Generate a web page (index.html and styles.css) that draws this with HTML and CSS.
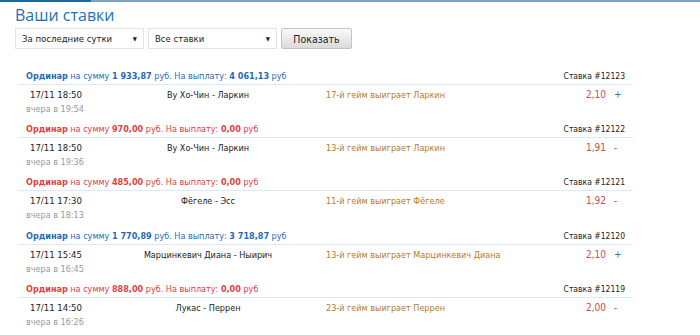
FILE: index.html
```html
<!DOCTYPE html>
<html lang="ru">
<head>
    <meta charset="UTF-8">
    <title>Ваши ставки</title>
    <link rel="stylesheet" href="styles.css">
</head>
<body>
    <div class="topline"><span></span></div>
    <div class="page">
        <h1 class="title">Ваши ставки</h1>
        <div class="filters">
            <div class="select first">За последние сутки<span class="arrow">▼</span></div>
            <div class="select">Все ставки<span class="arrow">▼</span></div>
            <button class="btn">Показать</button>
        </div>

        <div class="bets">
            <div class="bet win">
                <div class="bet-head">
                    <div><b>Ординар</b> на сумму <b>1 933,87</b> руб. На выплату: <b>4 061,13</b> руб</div>
                    <div class="num">Ставка #12123</div>
                </div>
                <div class="bet-row">
                    <span class="date">17/11 18:50</span>
                    <span class="match">Ву Хо-Чин - Ларкин</span>
                    <span class="pick">17-й гейм выиграет Ларкин</span>
                    <span class="odds">2,10</span>
                    <span class="sign">+</span>
                </div>
                <div class="when">вчера в 19:54</div>
            </div>

            <div class="bet lose">
                <div class="bet-head">
                    <div><b>Ординар</b> на сумму <b>970,00</b> руб. На выплату: <b>0,00</b> руб</div>
                    <div class="num">Ставка #12122</div>
                </div>
                <div class="bet-row">
                    <span class="date">17/11 18:50</span>
                    <span class="match">Ву Хо-Чин - Ларкин</span>
                    <span class="pick">13-й гейм выиграет Ларкин</span>
                    <span class="odds">1,91</span>
                    <span class="sign">-</span>
                </div>
                <div class="when">вчера в 19:36</div>
            </div>

            <div class="bet lose">
                <div class="bet-head">
                    <div><b>Ординар</b> на сумму <b>485,00</b> руб. На выплату: <b>0,00</b> руб</div>
                    <div class="num">Ставка #12121</div>
                </div>
                <div class="bet-row">
                    <span class="date">17/11 17:30</span>
                    <span class="match">Фёгеле - Эсс</span>
                    <span class="pick">11-й гейм выиграет Фёгеле</span>
                    <span class="odds">1,92</span>
                    <span class="sign">-</span>
                </div>
                <div class="when">вчера в 18:13</div>
            </div>

            <div class="bet win">
                <div class="bet-head">
                    <div><b>Ординар</b> на сумму <b>1 770,89</b> руб. На выплату: <b>3 718,87</b> руб</div>
                    <div class="num">Ставка #12120</div>
                </div>
                <div class="bet-row">
                    <span class="date">17/11 15:45</span>
                    <span class="match">Марцинкевич Диана - Ныирич</span>
                    <span class="pick">13-й гейм выиграет Марцинкевич Диана</span>
                    <span class="odds">2,10</span>
                    <span class="sign">+</span>
                </div>
                <div class="when">вчера в 16:45</div>
            </div>

            <div class="bet lose">
                <div class="bet-head">
                    <div><b>Ординар</b> на сумму <b>888,00</b> руб. На выплату: <b>0,00</b> руб</div>
                    <div class="num">Ставка #12119</div>
                </div>
                <div class="bet-row">
                    <span class="date">17/11 14:50</span>
                    <span class="match">Лукас - Перрен</span>
                    <span class="pick">23-й гейм выиграет Перрен</span>
                    <span class="odds">2,00</span>
                    <span class="sign">-</span>
                </div>
                <div class="when">вчера в 16:26</div>
            </div>
        </div>
    </div>
</body>
</html>
```

FILE: styles.css
```css
* {
    margin: 0;
    padding: 0;
    box-sizing: border-box;
}
body {
    font-family: "DejaVu Sans Condensed", "DejaVu Sans", sans-serif;
    font-size: 9px;
    color: #222;
    background-color: #fff;
}
/* полоска сверху */
.topline {
    height: 2px;
    background-color: #7ea3bf;
}
.topline span {
    display: block;
    width: 91px;
    height: 2px;
    background-color: #1b6a97;
}
.page {
    padding: 0 15px;
}
.title {
    font-family: "Open Sans", sans-serif;
    font-weight: normal;
    font-size: 16px;
    line-height: 20px;
    color: #1e6fc0;
    padding-top: 3px;
}
/* фильтры */
.filters {
    display: flex;
    gap: 4px;
    margin-top: 3px;
    height: 21px;
}
.select {
    position: relative;
    width: 129px;
    height: 21px;
    line-height: 19px;
    border: 1px solid #e4e4e4;
    padding-left: 6px;
    font-size: 9.5px;
    background-color: #fff;
}
.select .arrow {
    position: absolute;
    right: 6px;
    top: 0;
    font-size: 6px;
    color: #222;
}
.btn {
    width: 71px;
    height: 21px;
    font-family: "DejaVu Sans Condensed", "DejaVu Sans", sans-serif;
    font-size: 10.5px;
    color: #222;
    border: 1px solid #c3c3c3;
    border-radius: 2px;
    background: linear-gradient(#fafafa, #dadada);
}
/* ставки */
.bets {
    margin: 19px 52px 0 3px;
}
.bet {
    padding-bottom: 5.2px;
}
.bet-head {
    display: flex;
    justify-content: space-between;
    height: 17px;
    line-height: 16px;
    padding: 0 8px;
    border-bottom: 1px solid #dbeaf7;
}
.bet-head .num {
    font-size: 8.5px;
    color: #222;
}
.win .bet-head {
    color: #1d6ac0;
}
.lose .bet-head {
    color: #e2403f;
}
.bet-row {
    display: grid;
    grid-template-columns: 80px 196px 1fr 50px 27px;
    line-height: 14px;
    padding-left: 12px;
    margin-top: 3px;
}
.bet-row .date {
    font-size: 9.5px;
}
.bet-row .match {
    text-align: center;
}
.bet-row .pick {
    padding-left: 20px;
    color: #b67a2a;
}
.bet-row .odds {
    text-align: right;
    font-size: 10px;
    color: #cc4a50;
}
.bet-row .sign {
    padding-left: 8px;
    font-size: 10px;
}
.win .sign {
    color: #2b72c0;
}
.lose .sign {
    color: #e2403f;
}
.when {
    line-height: 14px;
    padding-left: 8px;
    color: #999;
}
```
